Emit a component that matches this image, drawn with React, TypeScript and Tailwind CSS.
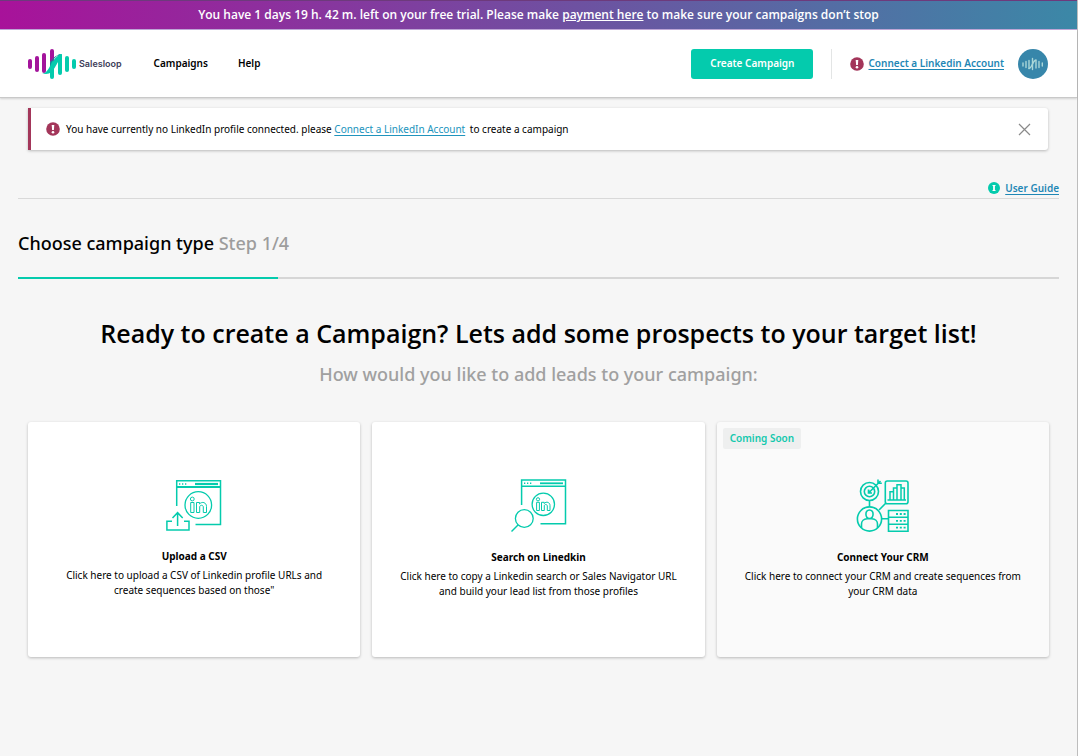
import React from "react";

const TEAL = "#04cbad";

function Logo() {
  return (
    <svg viewBox="27 47 50 32" className="h-8 w-[50px]" aria-hidden="true">
      <g stroke="#a3149b" strokeWidth="4" strokeLinecap="round">
        <path d="M30 60V66" />
        <path d="M37 57V69" />
        <path d="M44 54V70" />
        <path d="M52 50V62" />
      </g>
      <g stroke={TEAL} strokeWidth="4" strokeLinecap="round">
        <path d="M52 62V76" />
        <path d="M60 55V72" />
        <path d="M67 57V69" />
        <path d="M74 60V66" />
      </g>
      <path d="M42 72.500C50 73 51 55.500 62 53V57C56 60 55 73 46 73Z" fill={TEAL} />
      <path d="M50 66C52 60 54 55.500 61 53.300C57 54 53 56 50 62Z" fill="#187f9a" />
    </svg>
  );
}

function AlertIcon() {
  return (
    <svg viewBox="0 0 14 14" className="size-3.5 shrink-0" aria-hidden="true">
      <circle cx="7" cy="7" r="6.8" fill="#a3365a" />
      <path d="M5.700 3H8.300L7.900 8H6.100Z" fill="#fff" />
      <circle cx="7" cy="10.200" r="1.300" fill="#fff" />
    </svg>
  );
}

function InfoIcon() {
  return (
    <svg viewBox="0 0 12 12" className="size-3 shrink-0" aria-hidden="true">
      <circle cx="6" cy="6" r="6" fill={TEAL} />
      <path d="M4.500 3.500H7.500M4.500 8.500H7.500" stroke="#fff" strokeWidth="1" fill="none" />
      <path d="M6 3.500V8.500" stroke="#fff" strokeWidth="1.800" fill="none" />
    </svg>
  );
}

function Avatar() {
  return (
    <svg viewBox="0 0 30 30" className="size-[30px]" aria-hidden="true">
      <circle cx="15" cy="15" r="15" fill="#3786aa" />
      <g stroke="#a9d6d8" strokeWidth="1.400" strokeLinecap="round" fill="none">
        <path d="M5 14V17M8 12.500V18.500M11 11.500V19.500M14.500 9.500V20.500M18 11.500V19M21 12.500V18.500M24.300 14V17" />
        <path d="M11 19.500C14.500 19 14 12 18 11" />
      </g>
    </svg>
  );
}

function UploadIcon() {
  return (
    <svg viewBox="164 478 60 54" className="h-[54px] w-[60px]" fill="none" stroke={TEAL} strokeWidth="1.500" aria-hidden="true">
      <path d="M176.700 506V480.700H220.500V524.500H195.500" />
      <path d="M176.500 487H220.500" strokeWidth="1.800" />
      <path d="M179 484H180.300M182 484H183.300M185 484H186.300" />
      <path d="M195 484H218" strokeWidth="2.200" />
      <circle cx="198.300" cy="505" r="13.300" strokeWidth="1.300" />
      <g strokeWidth="1">
        <circle cx="192.300" cy="499" r="1.900" />
        <path d="M190.700 502.500H194V512.500H190.700ZM196.500 502.500H199.600V504C202 501 206.500 502.500 206.500 506.500V512.500H203.300V507C203.300 504.700 199.700 504.700 199.700 507V512.500H196.500Z" />
      </g>
      <path d="M177.600 526V513M172.500 518L177.600 512.700L182.700 518" />
      <path d="M172 521.300H166.900V530H189V521.300H184" />
    </svg>
  );
}

function SearchIcon() {
  return (
    <svg viewBox="508 478 60 55" className="h-[55px] w-[60px]" fill="none" stroke={TEAL} strokeWidth="1.500" aria-hidden="true">
      <path d="M521.600 505V479.900H565.500V523.800H540.500" />
      <path d="M521.500 486.300H565.500" strokeWidth="1.600" />
      <path d="M524 483.300H525.300M527 483.300H528.300M530 483.300H531.300" />
      <path d="M540 483.300H563" strokeWidth="1.800" />
      <circle cx="543.300" cy="504.300" r="11.200" strokeWidth="1.300" />
      <g strokeWidth="1">
        <circle cx="538" cy="499.300" r="1.600" />
        <path d="M536.600 502.300H539.400V510.500H536.600ZM541.500 502.300H544.200V503.500C546.300 501 550 502.300 550 505.500V510.500H547.300V506C547.300 504 544.300 504 544.300 506V510.500H541.500Z" />
      </g>
      <circle cx="524.300" cy="518.500" r="8.900" strokeWidth="1.300" />
      <path d="M518 525L511.500 531.500" />
    </svg>
  );
}

function CrmIcon() {
  return (
    <svg viewBox="853 478 60 55" className="h-[55px] w-[60px]" fill="none" stroke={TEAL} strokeWidth="1.600" aria-hidden="true">
      <circle cx="869.500" cy="491.500" r="9" />
      <circle cx="869.500" cy="491.500" r="5.200" />
      <path d="M868.500 489.500V493H872M868.800 492.700L880.500 481M878 479.500V483.300H881.800" />
      <circle cx="869.500" cy="491.800" r="1.400" fill={TEAL} stroke="none" />
      <rect x="885.300" y="481" width="22.700" height="22.700" rx="2" />
      <path d="M887.500 500H906M890 500V491.700H893.300M893.500 500V488H897M897 500V484.700H901V500M901 488H904.300V500" strokeWidth="1.500" />
      <path d="M869.500 500.500V507M879 510L885.700 503.300M882 518.800H888.500" />
      <circle cx="869.500" cy="519" r="12.100" />
      <path d="M869.500 510C864.500 510 865 518.500 869.500 518.500S874.500 510 869.500 510ZM861.500 528V524C861.500 521 864 519 867 518.800H872C875 519 877.500 521 877.500 524V528" />
      <path d="M888.500 510.500H908V531.200H888.500ZM888.500 517.300H908M888.500 524.200H908" />
      <path d="M896 514H898M899.800 514H901.800M903.600 514H905.600M896 520.800H898M899.800 520.800H901.800M903.600 520.800H905.600M896 527.700H898M899.800 527.700H901.800M903.600 527.700H905.600" strokeWidth="1.800" />
    </svg>
  );
}

interface CardProps {
  icon: React.ReactNode;
  title: string;
  text: string;
  soon?: boolean;
}

function Card({ icon, title, text, soon }: CardProps) {
  return (
    <button
      type="button"
      disabled={soon}
      className={
        "relative flex min-h-[235px] flex-col items-center rounded-[3px] px-4 pt-14 pb-12 text-center shadow-[0_1px_3px_rgba(0,0,0,0.25)] " +
        (soon ? "bg-[#fafafa]" : "bg-white")
      }
    >
      {soon && (
        <span className="absolute top-1.5 left-1.5 rounded-[2px] bg-[#eeefef] px-[7px] text-[10px] leading-[21px] font-semibold text-[#13c8ad]">
          Coming Soon
        </span>
      )}
      {icon}
      <span className="mt-4 text-[10px] leading-4 font-bold">{title}</span>
      <span className="mt-1 max-w-[284px] text-[10px] leading-[15px]">{text}</span>
    </button>
  );
}

export default function App() {
  return (
    <div className="flex min-h-screen flex-col border-r border-[#bdbdbd] bg-[#f6f6f6] font-['Noto_Sans','Open_Sans',sans-serif] text-black">
      <div className="border-t border-b border-t-[#6d3a7c] border-b-[#c0a8d8] bg-linear-to-r/srgb from-[#a8129a] to-[#3b88a7] text-center font-['Open_Sans',sans-serif] text-[12px] leading-7 font-semibold text-white">
        You have 1 days 19 h. 42 m. left on your free trial. Please make{" "}
        <a href="#payment" className="underline">payment here</a> to make sure your campaigns don’t stop
      </div>

      <header className="flex h-[68px] items-center border-b border-[#c9c9c9] bg-white pr-[29px] pl-[27px] shadow-[0_1px_2px_rgba(0,0,0,0.15)]">
        <a href="#home" className="flex items-center gap-0.5">
          <Logo />
          <span className="font-['Inter',sans-serif] text-[9px] font-semibold text-[#40405a]">Salesloop</span>
        </a>
        <nav className="ml-8 flex gap-[30px] text-[10px] font-semibold">
          <a href="#campaigns">Campaigns</a>
          <a href="#help">Help</a>
        </nav>
        <div className="ml-auto flex items-center">
          <button type="button" className="h-[30px] rounded-[3px] bg-[#04cbad] px-[19px] text-[10px] font-semibold text-white">
            Create Campaign
          </button>
          <div className="mx-[18px] h-[30px] w-px bg-[#e3e5e5]" />
          <a href="#connect" className="flex items-center gap-1 text-[10px] font-semibold text-[#1f87b5]">
            <AlertIcon />
            <span className="underline underline-offset-2">Connect a Linkedin Account</span>
          </a>
          <button type="button" aria-label="Account" className="ml-3.5">
            <Avatar />
          </button>
        </div>
      </header>

      <main className="flex flex-col px-[18px] pt-2.5">
        <div className="mr-[11px] ml-2.5 flex h-[42px] items-center rounded-r-[3px] border-l-[3px] border-[#a3365a] bg-white pr-[17px] pl-[15px] text-[10px] shadow-[0_1px_3px_rgba(0,0,0,0.25)]">
          <AlertIcon />
          <p className="ml-1.5">
            You have currently no LinkedIn profile connected. please{" "}
            <a href="#connect" className="mr-[2px] text-[#2094bd] underline underline-offset-2">Connect a LinkedIn Account</a> to create a campaign
          </p>
          <button type="button" aria-label="Close" className="ml-auto">
            <svg viewBox="0 0 13 13" className="size-[13px]" stroke="#8a8a8a" strokeWidth="1.200" aria-hidden="true">
              <path d="M1 1L12 12M12 1L1 12" />
            </svg>
          </button>
        </div>

        <div className="mt-7 flex justify-end border-b border-[#d9d9d9]">
          <a href="#guide" className="flex items-center gap-[5px] text-[10px] leading-5 font-semibold text-[#1f87b5]">
            <InfoIcon />
            <span className="underline underline-offset-2">User Guide</span>
          </a>
        </div>

        <h1 className="mt-8 text-[18px] leading-6 font-medium">
          Choose campaign type <span className="text-[#9d9d9d]">Step 1/4</span>
        </h1>
        <div className="mt-[22px] h-0.5 bg-[#d6d6d6]" role="progressbar" aria-valuenow={1} aria-valuemin={0} aria-valuemax={4} aria-label="Campaign steps">
          <div className="h-full w-1/4 bg-[#04cbad]" />
        </div>

        <h2 className="mt-9 text-center font-['Open_Sans',sans-serif] text-[25px] leading-9 font-semibold">
          Ready to create a Campaign? Lets add some prospects to your target list!
        </h2>
        <p className="mt-[11px] text-center text-[18px] leading-6 font-medium text-[#a0a0a0]">
          How would you like to add leads to your campaign:
        </p>

        <div className="mt-9 mr-2.5 ml-2.5 grid grid-cols-3 gap-3">
          <Card
            icon={<UploadIcon />}
            title="Upload a CSV"
            text={'Click here to upload a CSV of Linkedin profile URLs and create sequences based on those"'}
          />
          <Card
            icon={<SearchIcon />}
            title="Search on Linedkin"
            text="Click here to copy a Linkedin search or Sales Navigator URL and build your lead list from those profiles"
          />
          <Card
            soon
            icon={<CrmIcon />}
            title="Connect Your CRM"
            text="Click here to connect your CRM and create sequences from your CRM data"
          />
        </div>
      </main>
    </div>
  );
}
